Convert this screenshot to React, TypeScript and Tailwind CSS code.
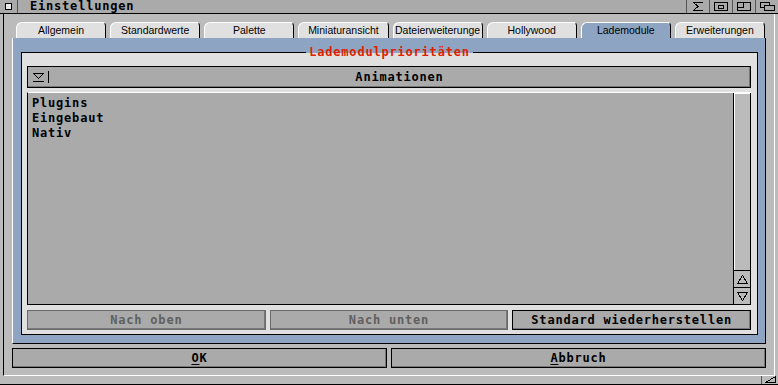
import React from 'react';

const mono = "font-['DejaVu_Sans_Mono',monospace] font-bold text-[12px] tracking-[0.8px]";

const TABS = ['Allgemein', 'Standardwerte', 'Palette', 'Miniaturansicht', 'Dateierweiterunge', 'Hollywood', 'Lademodule', 'Erweiterungen'];
const ACTIVE = 'Lademodule';

const ITEMS = ['Plugins', 'Eingebaut', 'Nativ'];

const Gadget: React.FC<{ children: React.ReactNode }> = ({ children }) => (
  <div className="w-[23px] border-l border-[#555] flex items-center justify-center">{children}</div>
);

const Btn: React.FC<{ label: React.ReactNode; disabled?: boolean; className?: string }> = ({ label, disabled, className }) => (
  <div
    className={`flex items-center justify-center bg-[#aaaaaa] border ${disabled ? 'border-[#6a6a6a] text-[#606060]' : 'border-black text-black'} shadow-[inset_-1px_-1px_0_#777] ${mono} ${className ?? ''}`}
  >
    {label}
  </div>
);

export default function App() {
  return (
    <div className="w-[778px] h-[385px] bg-[#bbbbbb] flex flex-col overflow-hidden select-none">
      {/* title bar */}
      <div className="h-[14px] bg-[#aaaaaa] border-b border-black flex items-stretch">
        <div className="w-[18px] border-r border-[#555] flex items-center justify-center">
          <svg width="7" height="7" shapeRendering="crispEdges">
            <rect x="0.5" y="0.5" width="6" height="6" fill="#e8e8e8" stroke="#000" />
          </svg>
        </div>
        <div className={`pl-[12px] leading-[13px] text-black ${mono}`}>Einstellungen</div>
        <div className="flex-1" />
        <Gadget>
          <svg width="12" height="9" shapeRendering="crispEdges">
            <path d="M1 0.5 H11 M1 8.5 H11 M1.5 0.5 L6 4.5 L1.5 8.5" stroke="#000" fill="none" />
          </svg>
        </Gadget>
        <Gadget>
          <svg width="14" height="9" shapeRendering="crispEdges">
            <rect x="0.5" y="0.5" width="13" height="8" fill="none" stroke="#000" />
            <rect x="4.5" y="3.5" width="5" height="3" fill="none" stroke="#000" />
          </svg>
        </Gadget>
        <Gadget>
          <svg width="14" height="9" shapeRendering="crispEdges">
            <rect x="0.5" y="0.5" width="13" height="8" fill="none" stroke="#000" />
            <rect x="0.5" y="0.5" width="6" height="5" fill="none" stroke="#000" />
          </svg>
        </Gadget>
        <Gadget>
          <svg width="15" height="9" shapeRendering="crispEdges">
            <rect x="0.5" y="0.5" width="9" height="5" fill="none" stroke="#000" />
            <rect x="4.5" y="3.5" width="10" height="5" fill="#aaaaaa" stroke="#000" />
          </svg>
        </Gadget>
      </div>

      {/* window body */}
      <div className="h-[362px] mx-[3px] border-l border-black border-r border-r-white border-b border-b-white px-[8px] pt-[8px] flex flex-col">
        {/* tabs */}
        <div className="h-[16px] flex gap-[4px] pl-[4px] pr-[1px]">
          {TABS.map((t) => (
            <div
              key={t}
              className={`flex-1 min-w-0 overflow-hidden whitespace-nowrap text-center rounded-tl-[6px] rounded-tr-[4px] border-t border-l border-white border-r border-r-black text-black text-[10.5px] leading-[15px] font-['Liberation_Sans',sans-serif] ${t === ACTIVE ? 'bg-[#8da4c2]' : 'bg-[#e0e0e0]'}`}
            >
              {t}
            </div>
          ))}
        </div>

        {/* register panel */}
        <div className="h-[306px] bg-[#8da4c2] border-l border-l-white border-r border-b border-black pl-[8px] pr-[7px] pt-[15px] pb-[8px]">
          <div className="relative h-full bg-[#e0e0e0] border-x border-b border-black pt-[13px] pl-[5px] pr-[6px] pb-[5px] flex flex-col">
            {/* group title over the top border */}
            <div className="absolute left-[-1px] right-[-1px] top-[-7px] h-[13px] flex items-center">
              <div className="flex-1 h-px bg-black" />
              <span className={`px-[3px] leading-[13px] text-[#e01e00] ${mono}`}>Lademodulprioritäten</span>
              <div className="flex-1 h-px bg-black" />
            </div>

            {/* cycle gadget */}
            <div className="h-[22px] flex items-stretch bg-[#aaaaaa] border border-black shadow-[inset_-1px_-1px_0_#777]">
              <div className="w-[20px] flex items-center justify-center">
                <svg width="13" height="11" shapeRendering="crispEdges">
                  <path d="M1.5 1.5 H11.5 L6.5 6.5 Z" fill="none" stroke="#000" />
                  <path d="M1 9.5 H12" stroke="#000" />
                </svg>
              </div>
              <div className="w-px bg-black my-[4px]" />
              <div className={`flex-1 flex items-center justify-center text-black ${mono}`}>Animationen</div>
            </div>

            {/* list + scroller */}
            <div className="mt-[4px] h-[213px] flex border-t border-t-white border-l border-b border-black">
              <div className={`flex-1 bg-[#aaaaaa] pl-[4px] pt-[3px] text-black leading-[15px] ${mono}`}>
                {ITEMS.map((i) => (
                  <div key={i}>{i}</div>
                ))}
              </div>
              <div className="w-[18px] flex flex-col border-x border-black bg-[#bbbbbb]">
                <div className="flex-1 border-b border-black shadow-[inset_1px_1px_0_#fff]" />
                <div className="h-[17px] border-b border-black flex items-center justify-center">
                  <svg width="11" height="9" shapeRendering="crispEdges">
                    <path d="M5.5 0.5 L10.5 8.5 H0.5 Z" fill="none" stroke="#000" />
                  </svg>
                </div>
                <div className="h-[16px] flex items-center justify-center">
                  <svg width="11" height="9" shapeRendering="crispEdges">
                    <path d="M0.5 0.5 H10.5 L5.5 8.5 Z" fill="none" stroke="#000" />
                  </svg>
                </div>
              </div>
            </div>

            {/* buttons */}
            <div className="mt-[5px] h-[19px] grid grid-cols-3 gap-[4px]">
              <Btn label="Nach oben" disabled />
              <Btn label="Nach unten" disabled />
              <Btn label="Standard wiederherstellen" />
            </div>
          </div>
        </div>

        {/* OK / Abbruch */}
        <div className="mt-[4px] h-[20px] grid grid-cols-2 gap-[4px]">
          <Btn label={<span><span className="underline underline-offset-2">O</span>K</span>} />
          <Btn label={<span><span className="underline underline-offset-2">A</span>bbruch</span>} />
        </div>
      </div>

      {/* bottom border */}
      <div className="h-[9px] border-b border-black flex justify-end">
        <div className="w-[17px] border-l border-[#555] flex items-end justify-center pb-[1px]">
          <svg width="11" height="7" shapeRendering="crispEdges">
            <path d="M10.5 0.5 V6.5 H0.5 Z" fill="none" stroke="#000" />
          </svg>
        </div>
      </div>
    </div>
  );
}
